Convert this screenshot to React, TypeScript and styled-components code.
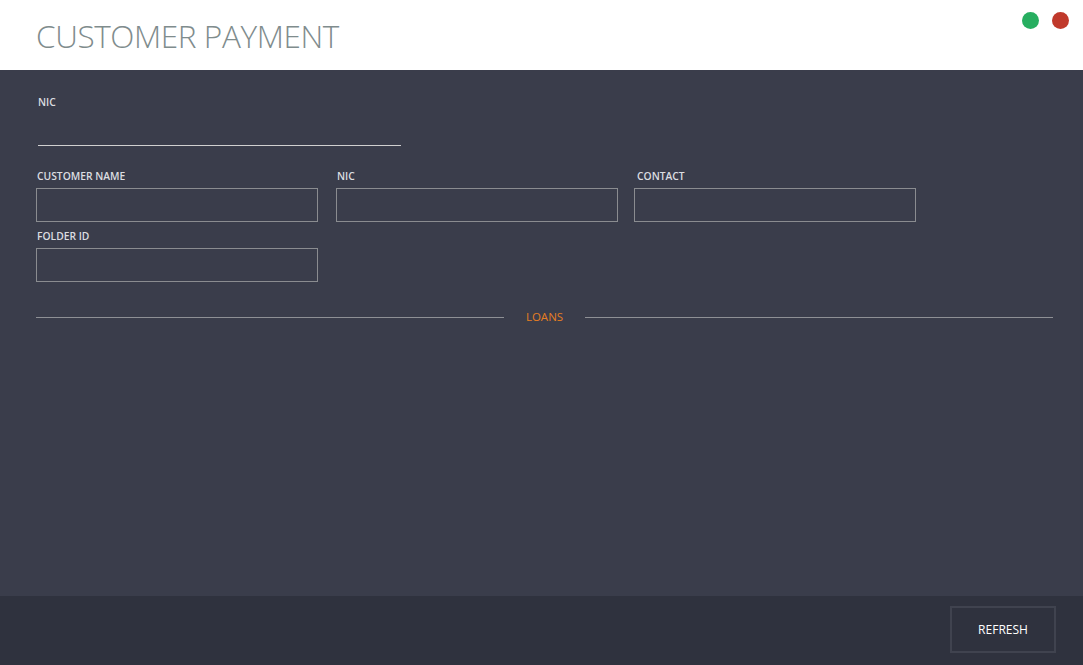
import React from "react";
import styled, { createGlobalStyle } from "styled-components";

const Global = createGlobalStyle`
  html, body { margin: 0; padding: 0; height: 100%; }
  body { background: #3a3d4b; font-family: "Open Sans", "Noto Sans", sans-serif; }
  #root { height: 100%; }
`;

const Window = styled.div`
  width: 1083px;
  height: 665px;
  display: flex;
  flex-direction: column;
  background: #3a3d4b;
  overflow: hidden;
`;

const Header = styled.header`
  height: 70px;
  background: #ffffff;
  display: flex;
  align-items: flex-start;
  justify-content: space-between;
  padding: 0 14px 0 36px;
  box-sizing: border-box;
  flex-shrink: 0;
`;

const Title = styled.h1`
  margin: 15px 0 0 0;
  font-family: "Open Sans", sans-serif;
  font-weight: 300;
  font-size: 31.5px;
  line-height: 42px;
  color: #7f8c8d;
  letter-spacing: -0.4px;
`;

const Controls = styled.div`
  display: flex;
  gap: 13px;
  margin-top: 12px;
`;

const Dot = styled.span<{ $color: string }>`
  width: 17px;
  height: 17px;
  border-radius: 50%;
  background: ${(p) => p.$color};
  display: block;
`;

const Body = styled.main`
  flex: 1;
  padding: 25px 30px 0 36px;
  box-sizing: border-box;
  display: flex;
  flex-direction: column;
`;

const SearchField = styled.div`
  width: 363px;
  margin-left: 2px;
  display: flex;
  flex-direction: column;
`;

const Label = styled.label`
  font-family: "Open Sans", sans-serif;
  font-weight: 600;
  font-size: 10.3px;
  line-height: 14px;
  color: #dcdde1;
  display: block;
`;

const UnderlineInput = styled.input`
  margin-top: 14px;
  height: 22px;
  background: transparent;
  border: none;
  border-bottom: 1px solid #d0d0d0;
  outline: none;
  color: #fff;
  padding: 0;
`;

const Grid = styled.div`
  margin-top: 23px;
  display: grid;
  grid-template-columns: 282px 282px 282px;
  column-gap: 18px;
  row-gap: 7px;
  width: 880px;
`;

const Field = styled.div<{ $shift?: number }>`
  display: flex;
  flex-direction: column;
  gap: 5px;
  margin-left: ${(p) => p.$shift ?? 0}px;
`;

const FieldLabel = styled(Label)<{ $indent?: number }>`
  padding-left: ${(p) => p.$indent ?? 1}px;
`;

const BoxInput = styled.input`
  box-sizing: border-box;
  width: 282px;
  height: 34px;
  background: transparent;
  border: 1px solid #8a8c90;
  outline: none;
  color: #fff;
  padding: 0 8px;
`;

const Divider = styled.div`
  margin-top: 28px;
  width: 1017px;
  display: flex;
  align-items: center;
  gap: 22px;
`;

const Rule = styled.span`
  flex: 1;
  height: 1px;
  background: #8e9095;
`;

const DividerText = styled.span`
  font-family: "Open Sans", sans-serif;
  font-size: 11.5px;
  line-height: 14px;
  color: #e67e22;
`;

const Footer = styled.footer`
  height: 69px;
  background: #2f323e;
  display: flex;
  align-items: flex-start;
  justify-content: flex-end;
  padding: 10px 27px 0 0;
  box-sizing: border-box;
  flex-shrink: 0;
`;

const Button = styled.button`
  width: 106px;
  height: 47px;
  background: transparent;
  border: 2px solid #40434f;
  color: #ffffff;
  font-family: "Open Sans", sans-serif;
  font-size: 12px;
  cursor: pointer;
`;

export default function App() {
  return (
    <>
      <Global />
      <Window>
        <Header>
          <Title>CUSTOMER PAYMENT</Title>
          <Controls>
            <Dot $color="#27ae60" />
            <Dot $color="#c0392b" />
          </Controls>
        </Header>
        <Body>
          <SearchField>
            <Label>NIC</Label>
            <UnderlineInput />
          </SearchField>
          <Grid>
            <Field>
              <FieldLabel>CUSTOMER NAME</FieldLabel>
              <BoxInput />
            </Field>
            <Field>
              <FieldLabel>NIC</FieldLabel>
              <BoxInput />
            </Field>
            <Field $shift={-2}>
              <FieldLabel $indent={3}>CONTACT</FieldLabel>
              <BoxInput />
            </Field>
            <Field>
              <FieldLabel>FOLDER ID</FieldLabel>
              <BoxInput />
            </Field>
          </Grid>
          <Divider>
            <Rule />
            <DividerText>LOANS</DividerText>
            <Rule />
          </Divider>
        </Body>
        <Footer>
          <Button>REFRESH</Button>
        </Footer>
      </Window>
    </>
  );
}
